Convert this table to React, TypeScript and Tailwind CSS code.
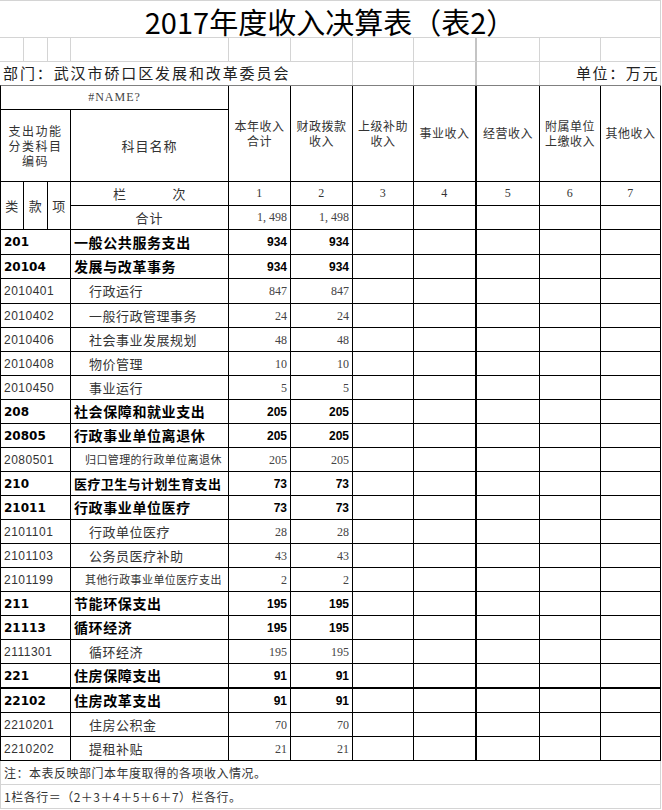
import React from "react";

const CJK = "font-['Noto_Sans_CJK_SC',sans-serif]";
const SERIFNUM = "font-['Liberation_Serif','Noto_Sans_CJK_SC',serif]";
const CODE = "font-['Liberation_Sans','Noto_Sans_CJK_SC',sans-serif]";
const BOLDNUM = "font-['Liberation_Sans','Noto_Sans_CJK_SC',sans-serif] font-bold";
const BOLDCODE = "font-['DejaVu_Sans','Noto_Sans_CJK_SC',sans-serif] font-bold";

type Row = {
  code: string;
  name: string;
  a: string;
  b: string;
  kind: "bold" | "item" | "small";
  h: number;
  nameSize?: string;
  thick?: boolean;
};

const rows: Row[] = [
  { code: "201", name: "一般公共服务支出", a: "934", b: "934", kind: "bold", h: 25 },
  { code: "20104", name: "发展与改革事务", a: "934", b: "934", kind: "bold", h: 24 },
  { code: "2010401", name: "行政运行", a: "847", b: "847", kind: "item", h: 25 },
  { code: "2010402", name: "一般行政管理事务", a: "24", b: "24", kind: "item", h: 24 },
  { code: "2010406", name: "社会事业发展规划", a: "48", b: "48", kind: "item", h: 24 },
  { code: "2010408", name: "物价管理", a: "10", b: "10", kind: "item", h: 24 },
  { code: "2010450", name: "事业运行", a: "5", b: "5", kind: "item", h: 24 },
  { code: "208", name: "社会保障和就业支出", a: "205", b: "205", kind: "bold", h: 24 },
  { code: "20805", name: "行政事业单位离退休", a: "205", b: "205", kind: "bold", h: 24 },
  { code: "2080501", name: "归口管理的行政单位离退休", a: "205", b: "205", kind: "small", h: 24 },
  { code: "210", name: "医疗卫生与计划生育支出", a: "73", b: "73", kind: "bold", h: 24, nameSize: "small" },
  { code: "21011", name: "行政事业单位医疗", a: "73", b: "73", kind: "bold", h: 24 },
  { code: "2101101", name: "行政单位医疗", a: "28", b: "28", kind: "item", h: 24 },
  { code: "2101103", name: "公务员医疗补助", a: "43", b: "43", kind: "item", h: 24 },
  { code: "2101199", name: "其他行政事业单位医疗支出", a: "2", b: "2", kind: "small", h: 24 },
  { code: "211", name: "节能环保支出", a: "195", b: "195", kind: "bold", h: 24 },
  { code: "21113", name: "循环经济", a: "195", b: "195", kind: "bold", h: 24 },
  { code: "2111301", name: "循环经济", a: "195", b: "195", kind: "item", h: 24 },
  { code: "221", name: "住房保障支出", a: "91", b: "91", kind: "bold", h: 25, thick: true },
  { code: "22102", name: "住房改革支出", a: "91", b: "91", kind: "bold", h: 24 },
  { code: "2210201", name: "住房公积金", a: "70", b: "70", kind: "item", h: 24 },
  { code: "2210202", name: "提租补贴", a: "21", b: "21", kind: "item", h: 24 },
];

const hcell = "border-r border-b border-black flex items-center justify-center text-center text-[12px] leading-[15px] tracking-[0.5px] text-[#333]";
const gl = "border-r border-b border-[#d4d4d4]";

function DataRow({ r }: { r: Row }) {
  const bb = r.thick ? "border-b-2" : "border-b";
  const c = `border-r ${bb} border-black`;
  const bold = r.kind === "bold";
  const num = bold
    ? `${BOLDNUM} text-[12px] text-black`
    : `${SERIFNUM} text-[12px] text-[#444]`;
  return (
    <div
      className={`grid grid-cols-[70px_158px_62px_62px_61px_63px_63px_61px_60px] border-l border-black w-[661px] ${r.h === 25 ? "h-[25px]" : "h-[24px]"}`}
    >
      <div className={`${c} flex items-center pl-[3px] ${bold ? `${BOLDCODE} text-[12px] text-black` : `${CODE} text-[12px] tracking-[0.5px] text-[#333]`}`}>
        {r.code}
      </div>
      <div
        className={`${c} flex items-center whitespace-nowrap overflow-hidden ${
          bold
            ? `${CJK} font-bold text-black pl-[3px] ${r.nameSize === "small" ? "text-[13px] tracking-[0.4px]" : "text-[14px] tracking-[0.6px]"}`
            : r.kind === "small"
            ? `${CJK} text-[#333] pl-[14px] text-[11px] tracking-[0.4px]`
            : `${CJK} text-[#333] pl-[18px] text-[13px] tracking-[0.5px]`
        }`}
      >
        {r.name}
      </div>
      <div className={`${c} flex items-center justify-end pr-[3px] ${num}`}>{r.a}</div>
      <div className={`${c} flex items-center justify-end pr-[3px] ${num}`}>{r.b}</div>
      <div className={c}></div>
      <div className={`border-r-2 ${bb} border-black`}></div>
      <div className={c}></div>
      <div className={c}></div>
      <div className={c}></div>
    </div>
  );
}

export default function App() {
  return (
    <div className={`${CJK} bg-white w-[662px] h-[810px] overflow-hidden`}>
      {/* Title */}
      <div className="h-[38px] w-[661px] border-t border-b border-r border-[#d4d4d4] flex items-center justify-center pt-[5px]">
        <span className="text-[29px] leading-none text-black">2017年度收入决算表（表2）</span>
      </div>
      {/* blank gridline row */}
      <div className="grid grid-cols-[24px_24px_23px_158px_62px_62px_61px_63px_63px_61px_60px] h-[24px] w-[661px]">
        <div className={gl}></div>
        <div className={gl}></div>
        <div className={gl}></div>
        <div className={gl}></div>
        <div className={gl}></div>
        <div className={gl}></div>
        <div className={gl}></div>
        <div className="border-r-2 border-b border-r-[#c4c4c4] border-b-[#d4d4d4]"></div>
        <div className={gl}></div>
        <div className={gl}></div>
        <div className={gl}></div>
      </div>
      {/* dept row */}
      <div className="grid grid-cols-[24px_24px_23px_158px_62px_62px_61px_63px_63px_61px_60px] h-[23px] w-[661px]">
        <div className="col-span-5 flex items-center pl-[3px] whitespace-nowrap text-[15px] tracking-[1.9px] text-[#222]">
          部门：武汉市硚口区发展和改革委员会
        </div>
        <div className="border-r border-[#d4d4d4]"></div>
        <div className="border-r border-[#d4d4d4]"></div>
        <div className="border-r-2 border-[#c4c4c4]"></div>
        <div className="border-r border-[#d4d4d4]"></div>
        <div className="col-span-2 border-r border-[#d4d4d4] flex items-center justify-end pr-[1px] whitespace-nowrap text-[15px] tracking-[1.6px] text-[#222]">
          单位：万元
        </div>
      </div>
      {/* header */}
      <div className="grid grid-cols-[23px_24px_23px_158px_62px_62px_61px_63px_63px_61px_60px] grid-rows-[24px_72px_24px_24px] w-[661px] border-l border-t border-l-black border-t-[#808080]">
        <div className={`${hcell} col-span-4 font-['Liberation_Serif',serif] !tracking-[1px] text-[#444]`}>#NAME?</div>
        <div className={`${hcell} row-span-2 pb-[2px]`}>本年收入<br />合计</div>
        <div className={`${hcell} row-span-2 pb-[2px]`}>财政拨款<br />收入</div>
        <div className={`${hcell} row-span-2 pb-[2px]`}>上级补助<br />收入</div>
        <div className={`${hcell} !border-r-2 row-span-2 pb-[2px]`}>事业收入</div>
        <div className={`${hcell} row-span-2 pb-[2px]`}>经营收入</div>
        <div className={`${hcell} row-span-2 pb-[2px]`}>附属单位<br />上缴收入</div>
        <div className={`${hcell} row-span-2 pb-[2px]`}>其他收入</div>
        <div className={`${hcell} col-span-3 !tracking-[1.5px] !leading-[15px]`}>支出功能<br />分类科目<br />编码</div>
        <div className={`${hcell} text-[13px] !tracking-[1px]`}>科目名称</div>
        <div className={`${hcell} row-span-2 text-[13px]`}>类</div>
        <div className={`${hcell} row-span-2 text-[13px]`}>款</div>
        <div className={`${hcell} row-span-2 text-[13px]`}>项</div>
        <div className={`${hcell} gap-[46px] text-[13px]`}><span>栏</span><span>次</span></div>
        <div className={`${hcell} ${SERIFNUM}`}>1</div>
        <div className={`${hcell} ${SERIFNUM}`}>2</div>
        <div className={`${hcell} ${SERIFNUM}`}>3</div>
        <div className={`${hcell} !border-r-2 ${SERIFNUM}`}>4</div>
        <div className={`${hcell} ${SERIFNUM}`}>5</div>
        <div className={`${hcell} ${SERIFNUM}`}>6</div>
        <div className={`${hcell} ${SERIFNUM}`}>7</div>
        <div className={`${hcell} text-[13px] !tracking-[1px]`}>合计</div>
        <div className={`${hcell} !justify-end pr-[3px] ${SERIFNUM} !tracking-[0px] text-[#444]`}>1, 498</div>
        <div className={`${hcell} !justify-end pr-[3px] ${SERIFNUM} !tracking-[0px] text-[#444]`}>1, 498</div>
        <div className={hcell}></div>
        <div className={`${hcell} !border-r-2`}></div>
        <div className={hcell}></div>
        <div className={hcell}></div>
        <div className={hcell}></div>
      </div>
      {rows.map((r, i) => (
        <DataRow key={i} r={r} />
      ))}
      {/* notes */}
      <div className="h-[24px] w-[661px] border-l border-r border-b border-[#d4d4d4] flex items-center pl-[3px] text-[12px] tracking-[0.5px] text-[#333] whitespace-nowrap">
        注：本表反映部门本年度取得的各项收入情况。
      </div>
      <div className="h-[24px] w-[661px] border-l border-r border-b border-[#d4d4d4] flex items-center pl-[3px] text-[12px] tracking-[0.5px] text-[#333] whitespace-nowrap">
        1栏各行＝（2＋3＋4＋5＋6＋7）栏各行。
      </div>
    </div>
  );
}
